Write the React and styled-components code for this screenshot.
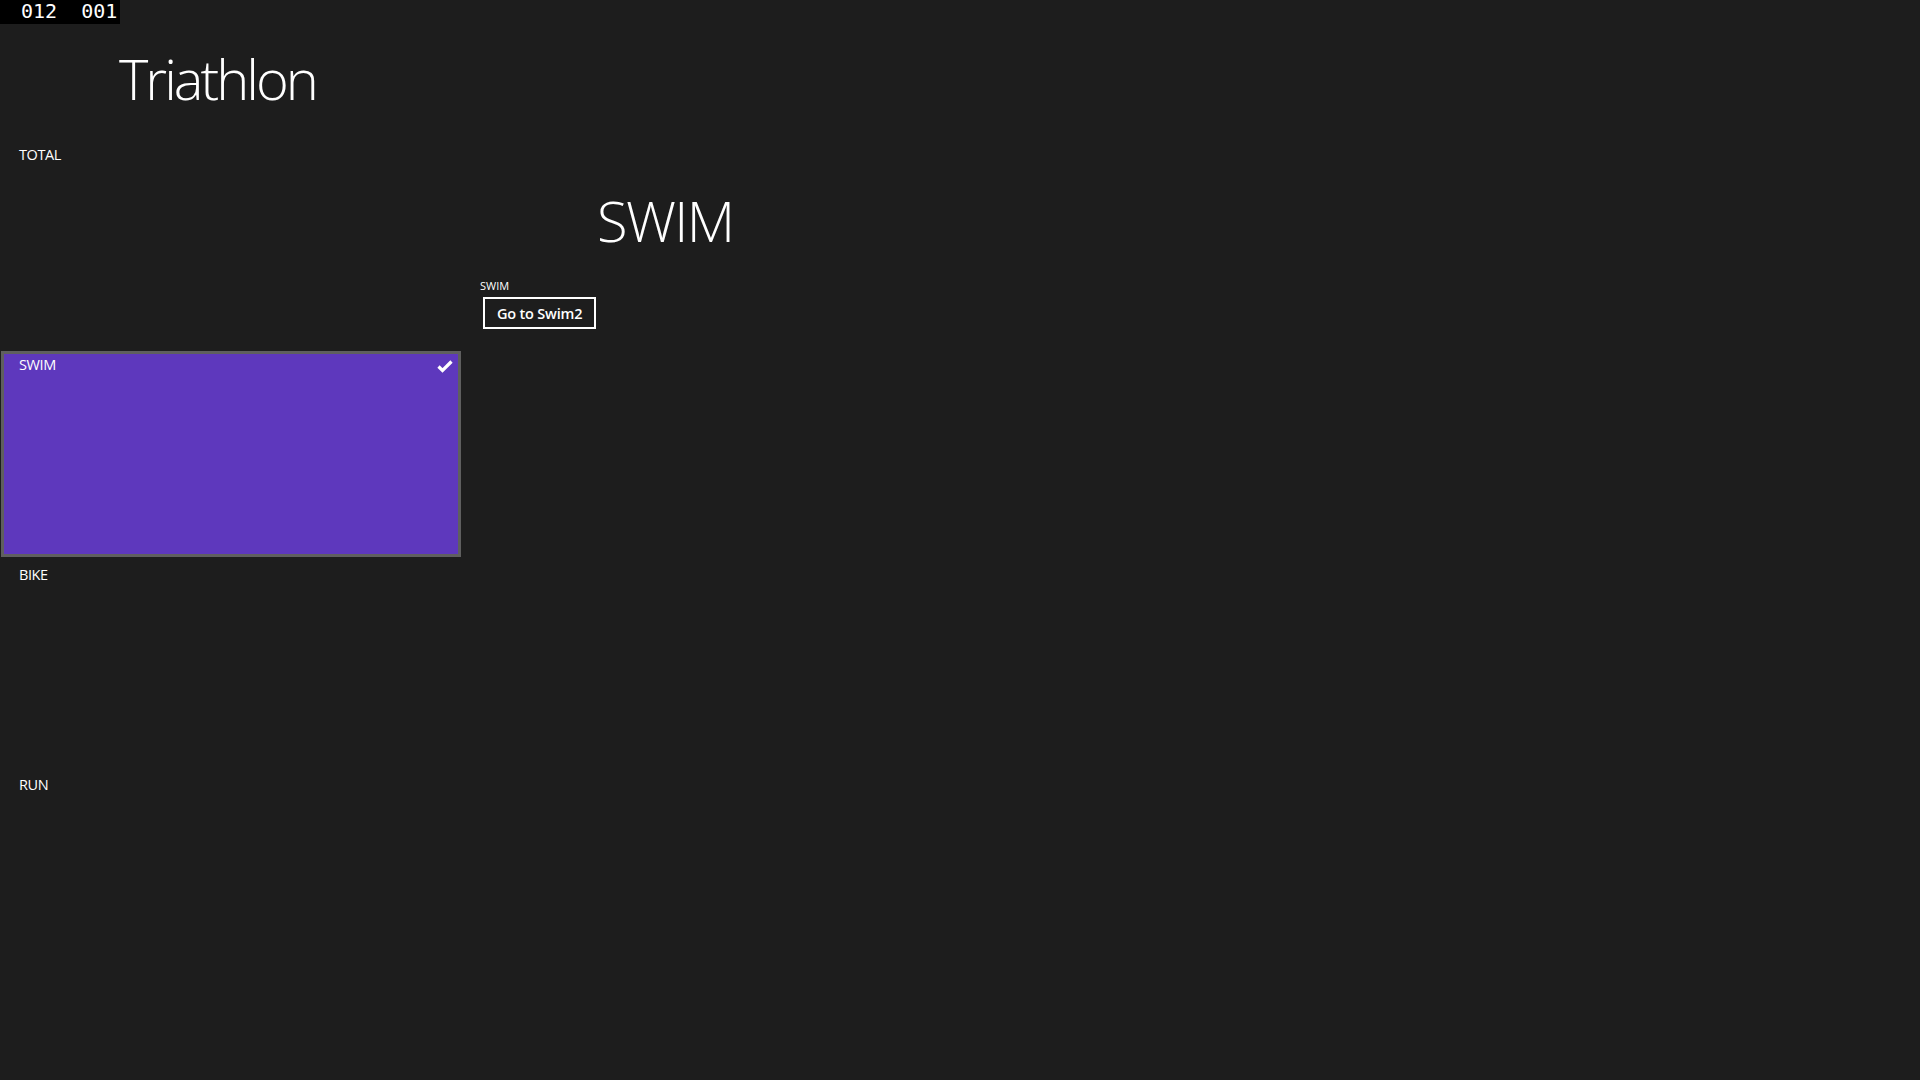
import styled, { createGlobalStyle } from 'styled-components'

const GlobalStyle = createGlobalStyle`
    html, body {
        margin: 0;
        padding: 0;
        background: #1d1d1d;
    }

    body {
        font-family: "Open Sans", "Noto Sans", sans-serif;
        color: #ffffff;
    }
`

const sections = [
    { name: "TOTAL" },
    { name: "SWIM", selected: true },
    { name: "BIKE" },
    { name: "RUN" },
]

const CheckIcon = () => (
    <svg width="16" height="13" viewBox="0 0 16 13">
        <path d="M1.5 6.5 L5.5 10.5 L14.5 1.5" fill="none" stroke="#ffffff" strokeWidth="3.2" />
    </svg>
)

const App = () => {
    return (
        <Page>
            <GlobalStyle />
            <Counter>
                <span>012</span>
                <span>001</span>
            </Counter>
            <Header>
                <Title>Triathlon</Title>
            </Header>
            <Body>
                <SectionList>
                    {sections.map((section) => (
                        <Item key={section.name} selected={section.selected}>
                            <ItemLabel>{section.name}</ItemLabel>
                            {section.selected && <Check><CheckIcon /></Check>}
                        </Item>
                    ))}
                </SectionList>
                <Detail>
                    <DetailTitle>SWIM</DetailTitle>
                    <DetailLabel>SWIM</DetailLabel>
                    <GoButton>Go to Swim2</GoButton>
                </Detail>
            </Body>
        </Page>
    );
};

const Page = styled.div`
    position: relative;
    width: 1920px;
    height: 1080px;
    overflow: hidden;
    background: #1d1d1d;
`

const Counter = styled.div`
    position: absolute;
    top: 0;
    left: 0;
    display: flex;
    gap: 24px;
    width: 120px;
    height: 24px;
    box-sizing: border-box;
    padding: 0 0 0 21px;
    background: #000000;
    font-family: "DejaVu Sans Mono", monospace;
    font-size: 20px;
    line-height: 22px;
    color: #ffffff;
`

const Header = styled.div`
    height: 141px;
    padding-left: 119px;
    box-sizing: border-box;
`

const Title = styled.h1`
    margin: 0;
    padding-top: 42px;
    font-size: 56px;
    font-weight: 300;
    line-height: 72px;
    letter-spacing: -3px;
`

const Body = styled.div`
    display: flex;
    align-items: flex-start;
`

const SectionList = styled.div`
    display: flex;
    flex-direction: column;
    gap: 4px;
    width: 460px;
    padding: 0 2px 0 1px;
`

const Item = styled.div`
    position: relative;
    height: 206px;
    box-sizing: border-box;
    border: 3px solid ${props => props.selected ? "#5f5f5f" : "transparent"};
    background: ${props => props.selected ? "#5e38bd" : "transparent"};
`

const ItemLabel = styled.div`
    padding: 1px 0 0 15px;
    font-size: 14.5px;
    line-height: 20px;
    letter-spacing: -0.4px;
`

const Check = styled.div`
    position: absolute;
    top: 6px;
    right: 5px;
    line-height: 0;
`

const Detail = styled.div`
    display: flex;
    flex-direction: column;
    align-items: flex-start;
    padding-left: 17px;
`

const DetailTitle = styled.div`
    margin-left: 117px;
    padding-top: 43px;
    font-size: 56px;
    font-weight: 300;
    line-height: 72px;
    letter-spacing: -1.6px;
`

const DetailLabel = styled.div`
    margin-top: 23px;
    font-size: 11px;
    line-height: 14px;
`

const GoButton = styled.button`
    margin: 4px 0 0 3px;
    height: 32px;
    padding: 0 12px;
    border: 2px solid #ffffff;
    background: transparent;
    color: #ffffff;
    font-family: "Open Sans", "Noto Sans", sans-serif;
    font-size: 14.5px;
    font-weight: 600;
    letter-spacing: -0.2px;
`

export default App;
